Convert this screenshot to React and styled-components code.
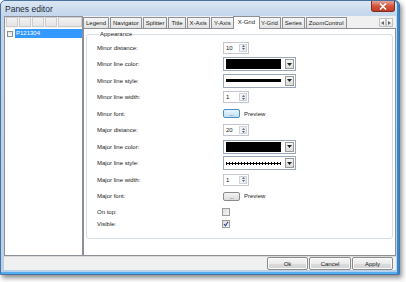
import React from "react";
import styled, { createGlobalStyle } from "styled-components";

const GlobalStyle = createGlobalStyle`
  html, body { margin: 0; padding: 0; background: #fff; }
  body {
    font-family: "Liberation Sans", Arial, sans-serif;
    font-size: 6px;
    color: #1a1a1a;
  }
  * { box-sizing: border-box; }
`;

const tabs = ["Legend", "Navigator", "Splitter", "Title", "X-Axis", "Y-Axis", "X-Grid", "Y-Grid", "Series", "ZoomControl"];

function App() {
    return (
        <Page>
            <GlobalStyle/>
            <Window>
                <TitleBar>
                    <Title>Panes editor</Title>
                    <CloseButton>
                        <svg width="8" height="7" viewBox="0 0 8 7">
                            <path d="M1 0.5 L7 6.5 M7 0.5 L1 6.5" stroke="#fff" strokeWidth="1.6"/>
                        </svg>
                    </CloseButton>
                </TitleBar>
                <Client>
                    <Main>
                        <LeftPanel>
                            <Toolbar>
                                <ToolButton/>
                                <ToolButton/>
                                <ToolButton/>
                                <ToolButton/>
                                <ToolFiller/>
                            </Toolbar>
                            <TreeItem>
                                <TreeCheck/>
                                <TreeLabel>P121304</TreeLabel>
                            </TreeItem>
                        </LeftPanel>
                        <TabControl>
                            <TabStrip>
                                {tabs.map((t) => (
                                    <Tab key={t} $active={t === "X-Grid"}>{t}</Tab>
                                ))}
                                <ScrollButtons>
                                    <ScrollButton>
                                        <svg width="3" height="4" viewBox="0 0 3 4"><path d="M3 0 L0 2 L3 4 Z" fill="#666"/></svg>
                                    </ScrollButton>
                                    <ScrollButton>
                                        <svg width="3" height="4" viewBox="0 0 3 4"><path d="M0 0 L3 2 L0 4 Z" fill="#666"/></svg>
                                    </ScrollButton>
                                </ScrollButtons>
                            </TabStrip>
                            <TabPage>
                                <GroupBox>
                                    <Legend>Appearance</Legend>
                                    <Row>
                                        <Label>Minor distance:</Label>
                                        <Spin value="10"/>
                                    </Row>
                                    <Row>
                                        <Label>Minor line color:</Label>
                                        <Combo><Swatch/></Combo>
                                    </Row>
                                    <Row>
                                        <Label>Minor line style:</Label>
                                        <Combo><LineSample/></Combo>
                                    </Row>
                                    <Row>
                                        <Label>Minor line width:</Label>
                                        <Spin value="1"/>
                                    </Row>
                                    <Row>
                                        <Label>Minor font:</Label>
                                        <FontButton $focused>...</FontButton>
                                        <Preview>Preview</Preview>
                                    </Row>
                                    <Row>
                                        <Label>Major distance:</Label>
                                        <Spin value="20"/>
                                    </Row>
                                    <Row>
                                        <Label>Major line color:</Label>
                                        <Combo><Swatch/></Combo>
                                    </Row>
                                    <Row>
                                        <Label>Major line style:</Label>
                                        <Combo><LineSample $dotted/></Combo>
                                    </Row>
                                    <Row>
                                        <Label>Major line width:</Label>
                                        <Spin value="1"/>
                                    </Row>
                                    <Row>
                                        <Label>Major font:</Label>
                                        <FontButton>...</FontButton>
                                        <Preview>Preview</Preview>
                                    </Row>
                                    <Row $h={14}>
                                        <Label>On top:</Label>
                                        <CheckBox/>
                                    </Row>
                                    <Row $h={10}>
                                        <Label>Visible:</Label>
                                        <CheckBox>
                                            <svg width="6" height="6" viewBox="0 0 6 6">
                                                <path d="M1 3 L2.5 4.8 L5 0.8" stroke="#2b3f8f" strokeWidth="1.1" fill="none"/>
                                            </svg>
                                        </CheckBox>
                                    </Row>
                                </GroupBox>
                            </TabPage>
                        </TabControl>
                    </Main>
                    <ButtonBar>
                        <DialogButton $w={41}>Ok</DialogButton>
                        <DialogButton $w={42}>Cancel</DialogButton>
                        <DialogButton $w={41}>Apply</DialogButton>
                    </ButtonBar>
                </Client>
            </Window>
        </Page>
    );
}

function Spin({value}) {
    return (
        <SpinBox>
            <SpinValue>{value}</SpinValue>
            <SpinButtons>
                <SpinArrow>
                    <svg width="3" height="2" viewBox="0 0 3 2"><path d="M0 2 L1.5 0 L3 2 Z" fill="#5a6a85"/></svg>
                </SpinArrow>
                <SpinArrow>
                    <svg width="3" height="2" viewBox="0 0 3 2"><path d="M0 0 L1.5 2 L3 0 Z" fill="#5a6a85"/></svg>
                </SpinArrow>
            </SpinButtons>
        </SpinBox>
    );
}

function Combo({children}) {
    return (
        <ComboBox>
            <ComboContent>{children}</ComboContent>
            <ComboArrow>
                <svg width="5" height="3" viewBox="0 0 5 3"><path d="M0 0 L5 0 L2.5 3 Z" fill="#222"/></svg>
            </ComboArrow>
        </ComboBox>
    );
}

const Page = styled.div`
  width: 406px;
  height: 282px;
  background: #fff;
`;

const Window = styled.div`
  width: 400px;
  height: 275px;
  display: flex;
  flex-direction: column;
  background: linear-gradient(#dbe6f3, #c3d6eb 14px, #b9d0ea);
  border: 1px solid #49729e;
  border-radius: 5px 5px 0 0;
  padding: 0 3px 4px 3px;
  box-shadow: inset -2px 0 0 #2f8ad6, inset 0 -2px 0 #52aef0, 2px 3px 5px rgba(0, 0, 0, 0.45);
`;

const TitleBar = styled.div`
  height: 15px;
  display: flex;
  justify-content: space-between;
  align-items: flex-start;
`;

const Title = styled.div`
  font-size: 8.5px;
  color: #1c2a3a;
  padding: 3px 0 0 1px;
`;

const CloseButton = styled.div`
  width: 24px;
  height: 11px;
  margin-right: 1px;
  display: flex;
  align-items: center;
  justify-content: center;
  background: linear-gradient(#e9a596, #d4553f 50%, #c23b24);
  border: 1px solid #7c2e22;
  border-top: none;
  border-radius: 0 0 3px 3px;
`;

const Client = styled.div`
  flex: 1;
  display: flex;
  flex-direction: column;
  background: #f0f0f0;
`;

const Main = styled.div`
  flex: 1;
  display: flex;
`;

const LeftPanel = styled.div`
  width: 79px;
  background: #fff;
  border: 1px solid #8d929a;
  display: flex;
  flex-direction: column;
`;

const Toolbar = styled.div`
  height: 11px;
  display: flex;
  padding: 0 0 0 1px;
  gap: 1px;
  background: #f4f4f4;
`;

const ToolButton = styled.div`
  width: 12px;
  height: 10px;
  background: linear-gradient(#f3f3f3, #e4e4e4);
  border: 1px solid #cdcdcd;
`;

const ToolFiller = styled(ToolButton)`
  flex: 1;
  width: auto;
`;

const TreeItem = styled.div`
  height: 9px;
  margin-top: 1px;
  display: flex;
  align-items: center;
  padding-left: 2px;
  gap: 2px;
`;

const TreeCheck = styled.div`
  width: 6px;
  height: 6px;
  border: 1px solid #8f8f8f;
  background: linear-gradient(#e8e8e8, #fafafa);
`;

const TreeLabel = styled.div`
  flex: 1;
  height: 9px;
  line-height: 9px;
  background: #3399ff;
  color: #fff;
  padding-left: 1px;
`;

const TabControl = styled.div`
  flex: 1;
  display: flex;
  flex-direction: column;
`;

const TabStrip = styled.div`
  height: 12px;
  display: flex;
  align-items: flex-end;
`;

const Tab = styled.div`
  position: relative;
  height: ${(p) => (p.$active ? 13 : 11)}px;
  line-height: ${(p) => (p.$active ? 11 : 10)}px;
  padding: 0 ${(p) => (p.$active ? 4 : 2)}px;
  margin: 0 ${(p) => (p.$active ? -2 : 0)}px ${(p) => (p.$active ? -1 : 0)}px;
  margin-right: ${(p) => (p.$active ? -2 : 1)}px;
  z-index: ${(p) => (p.$active ? 1 : 0)};
  background: ${(p) => (p.$active ? "#fff" : "linear-gradient(#f5f5f5, #e3e3e3)")};
  border: 1px solid #8c9096;
  border-bottom: none;
  border-radius: 1px 1px 0 0;
  white-space: nowrap;
`;

const ScrollButtons = styled.div`
  margin-left: auto;
  margin-right: 3px;
  margin-bottom: 1px;
  display: flex;
`;

const ScrollButton = styled.div`
  width: 7px;
  height: 9px;
  display: flex;
  align-items: center;
  justify-content: center;
  background: linear-gradient(#fafafa, #e6e6e6);
  border: 1px solid #c2c2c2;
`;

const TabPage = styled.div`
  flex: 1;
  background: #fff;
  border: 1px solid #8c9096;
  padding: 2px 2px 0 2px;
`;

const GroupBox = styled.fieldset`
  margin: 0;
  border: 1px solid #d5dfe5;
  border-radius: 3px;
  padding: 1.5px 0 9.5px 10px;
`;

const Legend = styled.legend`
  padding: 0 1px;
  margin-left: 2px;
  line-height: 7px;
`;

const Row = styled.div`
  height: ${(p) => p.$h || 16.5}px;
  display: flex;
  align-items: center;
`;

const Label = styled.div`
  width: 126px;
`;

const SpinBox = styled.div`
  width: 26px;
  height: 12px;
  display: flex;
  background: #fff;
  border: 1px solid #c3c7cf;
`;

const SpinValue = styled.div`
  flex: 1;
  padding-left: 2px;
  line-height: 10px;
`;

const SpinButtons = styled.div`
  width: 8px;
  margin: 1px;
  display: flex;
  flex-direction: column;
  border: 1px solid #cfd3da;
  background: linear-gradient(90deg, #f6f6f6, #e6e9ee);
`;

const SpinArrow = styled.div`
  flex: 1;
  display: flex;
  align-items: center;
  justify-content: center;
`;

const ComboBox = styled.div`
  width: 73px;
  height: 14px;
  display: flex;
  padding: 1px;
  gap: 3px;
  background: #fff;
  border: 1px solid #9aa7b8;
`;

const ComboContent = styled.div`
  flex: 1;
  display: flex;
  align-items: center;
  padding: 0 1px;
`;

const Swatch = styled.div`
  flex: 1;
  height: 10px;
  background: #000;
`;

const LineSample = styled.div`
  flex: 1;
  height: 3px;
  background: ${(p) =>
    p.$dotted
      ? "linear-gradient(#000, #000) center / 100% 1px no-repeat, repeating-linear-gradient(90deg, #000 0 1px, transparent 1px 3px)"
      : "#000"};
`;

const ComboArrow = styled.div`
  width: 9px;
  display: flex;
  align-items: center;
  justify-content: center;
  background: linear-gradient(#f4f4f4, #dcdcdc);
  border: 1px solid #9a9a9a;
`;

const FontButton = styled.div`
  width: 17px;
  height: 9px;
  display: flex;
  align-items: center;
  justify-content: center;
  line-height: 5px;
  font-size: 5px;
  padding-top: 2px;
  border: 1px solid ${(p) => (p.$focused ? "#4d8fc4" : "#8a8a8a")};
  border-radius: 2px;
  background: ${(p) =>
    p.$focused ? "linear-gradient(#eaf5fd, #bfe0f7)" : "linear-gradient(#f4f4f4, #dcdcdc)"};
`;

const Preview = styled.div`
  margin-left: 4px;
`;

const CheckBox = styled.div`
  width: 8px;
  height: 8px;
  margin-left: -1px;
  display: flex;
  align-items: center;
  justify-content: center;
  border: 1px solid #9c9c9c;
  background: linear-gradient(135deg, #dcdcdc, #f6f6f6);
`;

const ButtonBar = styled.div`
  height: 14px;
  display: flex;
  justify-content: flex-end;
  align-items: flex-start;
  gap: 1px;
  padding-right: 3px;
  border-top: 1px solid #dadada;
`;

const DialogButton = styled.div`
  width: ${(p) => p.$w}px;
  height: 13px;
  display: flex;
  align-items: center;
  justify-content: center;
  border: 1px solid #8a8a8a;
  border-radius: 2px;
  background: linear-gradient(#f6f6f6, #ebebeb 50%, #dcdcdc 51%, #d2d2d2);
  box-shadow: inset 0 0 0 1px #fbfbfb;
`;

export default App;
